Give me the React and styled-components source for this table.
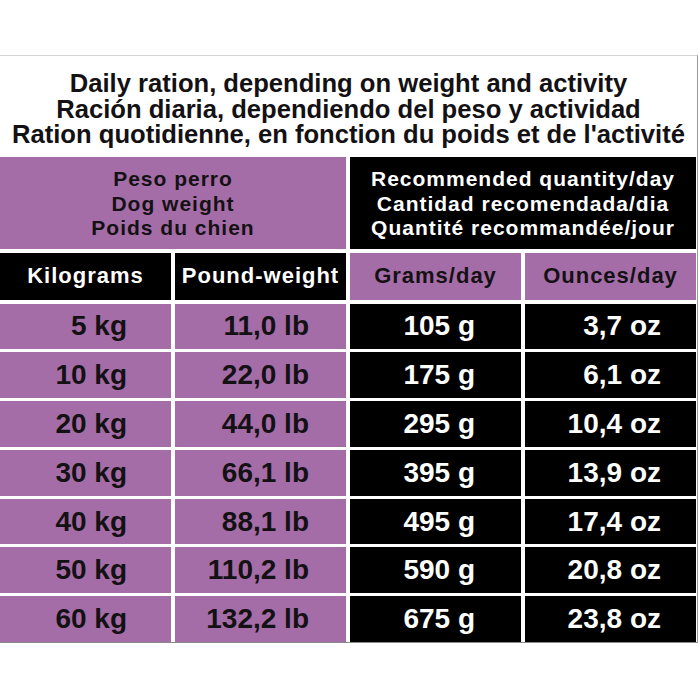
import React from "react";
import styled, { createGlobalStyle, css } from "styled-components";

const purple = "#a56da7";
const ink = "#141114";

const GlobalStyle = createGlobalStyle`
  html, body {
    margin: 0;
    padding: 0;
    background: #ffffff;
  }
  body {
    font-family: "Liberation Sans", Arial, sans-serif;
  }
`;

const Frame = styled.div`
  margin-top: 55px;
  width: 697px;
  border-top: 1px solid #d4d4d4;
  border-right: 1px solid #9a9a9a;
  border-bottom: 1px solid #8a8a8a;
`;

const Title = styled.div`
  padding: 15px 0 9px;
  text-align: center;
  font-size: 25.6px;
  line-height: 25.5px;
  font-weight: 700;
  color: ${ink};
`;

const Line = styled.span`
  display: block;
  white-space: nowrap;
`;

const Table = styled.div`
  display: flex;
  flex-direction: column;
  gap: 3px;
`;

const Row = styled.div`
  display: grid;
  grid-template-columns: repeat(4, 171px);
  column-gap: 4px;
  height: ${(p) => p.$height}px;
  ${(p) =>
    p.$spaced &&
    css`
      margin-bottom: 1px;
    `};
`;

const Cell = styled.div`
  display: flex;
  align-items: center;
  font-weight: 700;
  white-space: nowrap;
  background: ${(p) => (p.$dark ? "#000000" : purple)};
  color: ${(p) => (p.$dark ? "#ffffff" : ink)};
`;

const GroupCell = styled(Cell)`
  grid-column: span 2;
  flex-direction: column;
  justify-content: center;
  font-size: 21px;
  line-height: 24.5px;
  letter-spacing: 1px;
  padding-top: 3px;
`;

const LabelCell = styled(Cell)`
  justify-content: center;
  font-size: 22px;
  letter-spacing: 1px;
`;

const ValueCell = styled(Cell)`
  justify-content: flex-end;
  padding-right: ${(p) => p.$pad}px;
  font-size: 28px;
`;

const rows = [
  ["5 kg", "11,0 lb", "105 g", "3,7 oz"],
  ["10 kg", "22,0 lb", "175 g", "6,1 oz"],
  ["20 kg", "44,0 lb", "295 g", "10,4 oz"],
  ["30 kg", "66,1 lb", "395 g", "13,9 oz"],
  ["40 kg", "88,1 lb", "495 g", "17,4 oz"],
  ["50 kg", "110,2 lb", "590 g", "20,8 oz"],
  ["60 kg", "132,2 lb", "675 g", "23,8 oz"],
];

const pads = [44, 37, 46, 35];

function App() {
  return (
    <>
      <GlobalStyle />
      <Frame>
        <Title>
          <Line>Daily ration, depending on weight and activity</Line>
          <Line>Ración diaria, dependiendo del peso y actividad</Line>
          <Line>Ration quotidienne, en fonction du poids et de l'activité</Line>
        </Title>
        <Table>
          <Row $height={92} $spaced>
            <GroupCell>
              <span>Peso perro</span>
              <span>Dog weight</span>
              <span>Poids du chien</span>
            </GroupCell>
            <GroupCell $dark>
              <span>Recommended quantity/day</span>
              <span>Cantidad recomendada/dia</span>
              <span>Quantité recommandée/jour</span>
            </GroupCell>
          </Row>
          <Row $height={47} $spaced>
            <LabelCell $dark>Kilograms</LabelCell>
            <LabelCell $dark>Pound-weight</LabelCell>
            <LabelCell>Grams/day</LabelCell>
            <LabelCell>Ounces/day</LabelCell>
          </Row>
          {rows.map((row) => (
            <Row key={row[0]} $height={45.8}>
              {row.map((value, i) => (
                <ValueCell key={i} $dark={i > 1} $pad={pads[i]}>
                  {value}
                </ValueCell>
              ))}
            </Row>
          ))}
        </Table>
      </Frame>
    </>
  );
}

export default App;
